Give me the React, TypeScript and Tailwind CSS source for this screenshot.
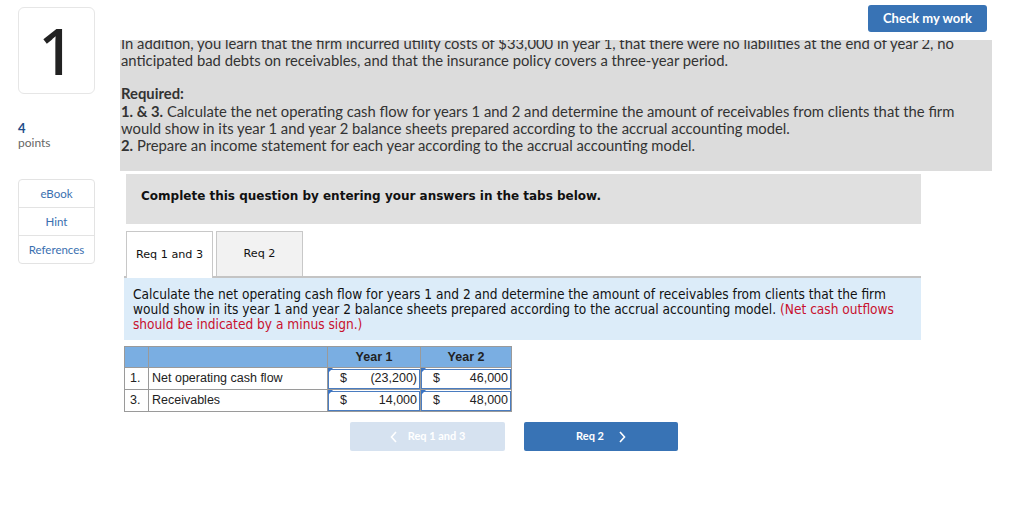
import React from 'react';

const prose = { fontFamily: '"Lato", "Open Sans", sans-serif' };
const verdana = { fontFamily: '"DejaVu Sans", Verdana, sans-serif' };
const tahoma = { fontFamily: '"DejaVu Sans Condensed", Tahoma, sans-serif' };
const arial = { fontFamily: '"Liberation Sans", Arial, sans-serif' };

const rows = [
  { no: '1.', label: 'Net operating cash flow', y1: '(23,200)', y2: '46,000' },
  { no: '3.', label: 'Receivables', y1: '14,000', y2: '48,000' },
];

const AnswerCell: React.FC<{ value: string }> = ({ value }) => (
  <td className="relative h-[22px] border border-[#9a9a9a] p-0">
    <div className="flex h-[20px] items-center justify-between border border-[#4a7cc0] bg-white pl-[11px] pr-[2px] text-[12.5px] text-[#222]">
      <span>$</span>
      <span>{value}</span>
    </div>
    <span className="absolute left-0 top-0 h-0 w-0 border-r-[5px] border-t-[5px] border-r-transparent border-t-[#3a74c4]" />
  </td>
);

const App: React.FC = () => {
  return (
    <div className="flex h-[505px] w-[1024px] overflow-hidden bg-white text-[#333]">
      {/* left rail */}
      <aside className="w-[120px] shrink-0 pl-[18px] pt-[7px]" style={prose}>
        <div className="flex h-[87px] w-[77px] items-center justify-center rounded-[6px] border border-[#e6e6e6]">
          <span className="text-[64px] font-medium leading-none text-[#222]" style={{ fontFamily: '"Noto Sans", sans-serif' }}>1</span>
        </div>
        <div className="mt-[26px] text-[13px] font-bold leading-[16px] text-[#1f4d8a]">4</div>
        <div className="text-[12px] leading-[14px] text-[#666]">points</div>
        <div className="mt-[29px] w-[77px] overflow-hidden rounded-[4px] border border-[#e3e3e3] text-[11.5px] text-[#3a6fb0]">
          <div className="flex h-[28px] items-center justify-center border-b border-[#e3e3e3]">eBook</div>
          <div className="flex h-[28px] items-center justify-center border-b border-[#e3e3e3]">Hint</div>
          <div className="flex h-[27px] items-center justify-center">References</div>
        </div>
      </aside>

      {/* main column */}
      <main className="flex-1">
        <div className="flex h-[40px] justify-end pr-[37px] pt-[5px]">
          <button className="h-[27px] w-[119px] rounded-[3px] bg-[#3873b5] text-[13px] font-bold text-white" style={prose}>
            Check my work
          </button>
        </div>

        <div className="h-[131px] w-[872px] overflow-hidden whitespace-nowrap bg-[#dcdcdc] pl-px text-[14.8px] leading-[17px] text-[#333]" style={prose}>
          <p className="-mt-[5px]">
            In addition, you learn that the firm incurred utility costs of $33,000 in year 1, that there were no liabilities at the end of year 2, no
            <br />
            anticipated bad debts on receivables, and that the insurance policy covers a three-year period.
          </p>
          <p className="mt-[16px] font-bold">Required:</p>
          <p className="mt-px">
            <b>1. &amp; 3.</b> Calculate the net operating cash flow for years 1 and 2 and determine the amount of receivables from clients that the firm
            <br />
            would show in its year 1 and year 2 balance sheets prepared according to the accrual accounting model.
          </p>
          <p>
            <b>2.</b> Prepare an income statement for each year according to the accrual accounting model.
          </p>
        </div>

        <div className="ml-[6px] mt-[3px] flex h-[50px] w-[795px] items-center bg-[#e0e0e0] pl-[15px] pb-[7px] text-[12px] font-bold text-[#111]" style={verdana}>
          Complete this question by entering your answers in the tabs below.
        </div>

        <div className="ml-[6px] mt-[7px] flex gap-[3px] text-[11.2px] text-[#111]" style={verdana}>
          <div className="relative -mb-[2px] flex h-[47px] w-[87px] items-center justify-center border border-b-0 border-[#c8c8c8] bg-white">Req 1 and 3</div>
          <div className="flex h-[45px] w-[87px] items-center justify-center border border-b-0 border-[#c8c8c8] bg-[#f2f2f2]">Req 2</div>
        </div>

        <div className="ml-[4px] w-[797px] whitespace-nowrap border-t-2 border-[#c4c4c4] bg-[#dcecf9] px-[9px] pb-[8px] pt-[9px] text-[13.6px] leading-[15px] text-[#111]" style={tahoma}>
          Calculate the net operating cash flow for years 1 and 2 and determine the amount of receivables from clients that the firm
          <br />
          would show in its year 1 and year 2 balance sheets prepared according to the accrual accounting model.{' '}
          <span className="text-[#c8102e]">
            (Net cash outflows
            <br />
            should be indicated by a minus sign.)
          </span>
        </div>

        <table className="ml-[4px] mt-[6px] border-collapse text-[12.5px] text-[#222]" style={arial}>
          <thead>
            <tr className="h-[21px] bg-[#7aaee2]">
              <th className="w-[24px] border border-[#9a9a9a]" />
              <th className="w-[179px] border border-[#9a9a9a]" />
              <th className="w-[93px] border border-[#9a9a9a] font-bold">Year 1</th>
              <th className="w-[91px] border border-[#9a9a9a] font-bold">Year 2</th>
            </tr>
          </thead>
          <tbody>
            {rows.map((r) => (
              <tr key={r.no} className="h-[22px]">
                <td className="border border-[#9a9a9a] px-[5px]">{r.no}</td>
                <td className="border border-[#9a9a9a] px-[3px]">{r.label}</td>
                <AnswerCell value={r.y1} />
                <AnswerCell value={r.y2} />
              </tr>
            ))}
          </tbody>
        </table>

        <div className="ml-[230px] mt-[10px] flex gap-[19px] text-[11px] font-bold text-white" style={prose}>
          <button className="flex h-[29px] w-[155px] items-center justify-center gap-[10px] rounded-[2px] bg-[#d6e2f0]">
            <svg width="8" height="12" viewBox="0 0 8 12" fill="none" stroke="white" strokeWidth="1.6"><path d="M6 1L1.5 6L6 11" /></svg>
            Req 1 and 3
          </button>
          <button className="flex h-[29px] w-[154px] items-center justify-center gap-[14px] rounded-[2px] bg-[#3873b5]">
            Req 2
            <svg width="8" height="12" viewBox="0 0 8 12" fill="none" stroke="white" strokeWidth="1.6"><path d="M2 1L6.5 6L2 11" /></svg>
          </button>
        </div>
      </main>
    </div>
  );
};

export default App;
